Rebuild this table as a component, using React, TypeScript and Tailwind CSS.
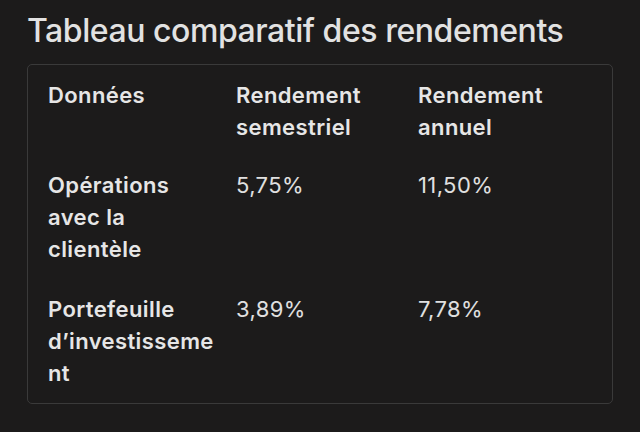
const rows = [
  { label: "Opérations avec la clientèle", semester: "5,75%", annual: "11,50%" },
  { label: "Portefeuille d’investissement", semester: "3,89%", annual: "7,78%" },
];

export default function App() {
  return (
    <div
      className="h-[432px] w-[640px] overflow-hidden bg-[#1c1b1b] px-[27px] pt-[11px] text-[#e6e6e6]"
      style={{ fontFamily: "Inter, 'Noto Sans', sans-serif" }}
    >
      <h1 className="text-[32px] leading-[40px] font-medium tracking-[-0.45px] text-[#e2e2e2]">
        Tableau comparatif des rendements
      </h1>
      <div className="mt-[13px] rounded-[5px] border border-[#3a3a3a] px-[20px] pt-[14px] pb-[14px]">
        <div className="grid grid-cols-[188px_182px_1fr] text-[22px] leading-[32px] tracking-[0.4px]">
          <div className="pr-4 font-semibold">Données</div>
          <div className="pr-4 font-semibold">Rendement semestriel</div>
          <div className="pr-4 font-semibold">Rendement annuel</div>
          {rows.map((r, i) => (
            <div key={r.label} className={`col-span-3 grid grid-cols-subgrid ${i === 0 ? "mt-[26px]" : "mt-[28px]"}`}>
              <div className="pr-4 font-semibold break-words">{r.label}</div>
              <div className="pr-4 font-normal text-[#e0e0e0]">{r.semester}</div>
              <div className="pr-4 font-normal text-[#e0e0e0]">{r.annual}</div>
            </div>
          ))}
        </div>
      </div>
    </div>
  );
}
